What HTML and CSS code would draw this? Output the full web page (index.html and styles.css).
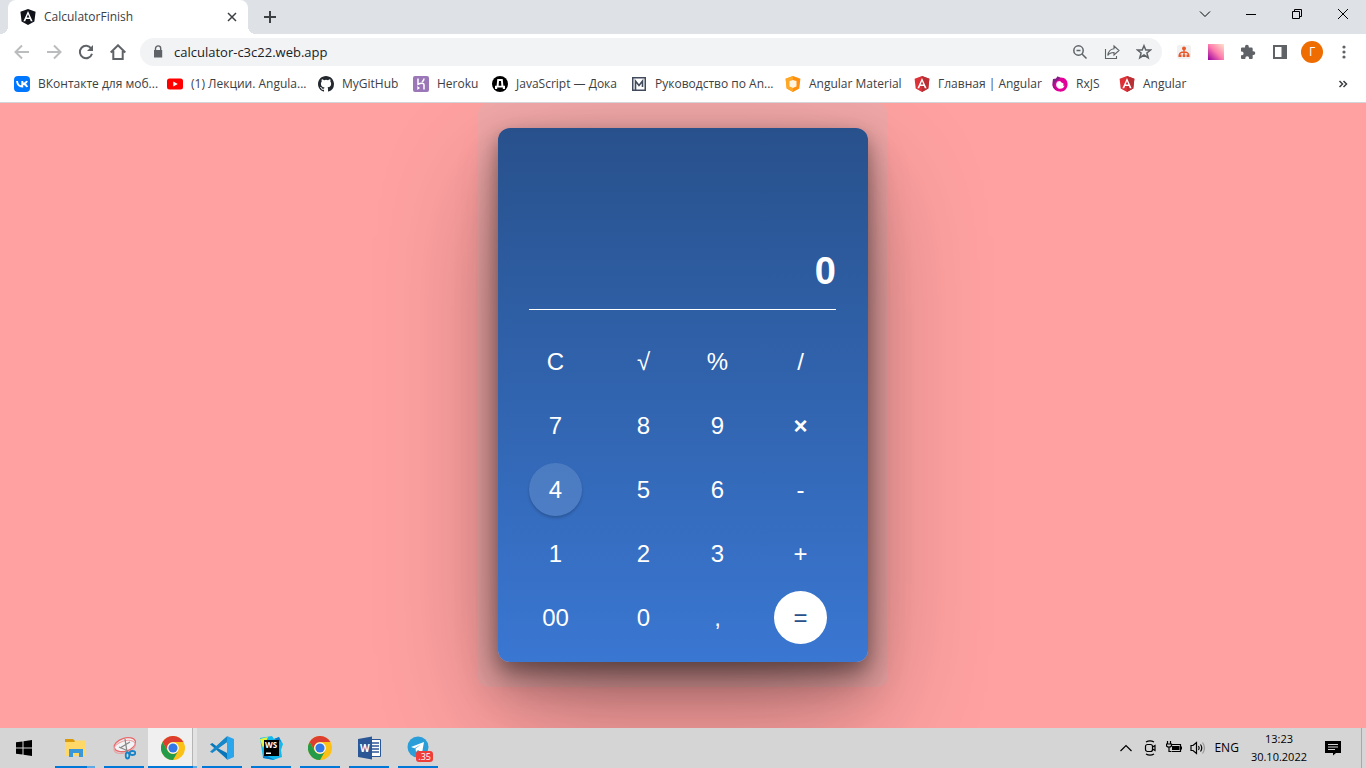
FILE: index.html
```html
<!DOCTYPE html>
<html lang="ru">
<head>
<meta charset="utf-8">
<title>CalculatorFinish</title>
<link rel="stylesheet" href="styles.css">
</head>
<body>
<svg class="defs" aria-hidden="true">
  <symbol id="ng-shield" viewBox="0 0 16 16"><path fill="#dd3138" d="M8 0L15.400 2.700L14.300 12.500L8 16L1.700 12.500L.6 2.700z"/><path fill="#b92f34" d="M8 0L15.400 2.700L14.300 12.500L8 16z"/><path fill="#fff" fill-rule="evenodd" d="M8 2L3.400 12.300H5.200L6.100 10H9.900L10.800 12.300H12.600zM8 5.200L9.300 8.500H6.700z"/></symbol>
  <symbol id="chrome" viewBox="0 0 24 24"><circle cx="12" cy="12" r="12" fill="#fbc116"/><path fill="#de3e2f" d="M1.600 6A12 12 0 0 1 22.400 6H12A6 6 0 0 0 6.800 15z"/><path fill="#249b49" d="M1.600 6A12 12 0 0 0 12 24L17.200 15A6 6 0 0 1 6.800 15z"/><circle cx="12" cy="12" r="5.800" fill="#fff"/><circle cx="12" cy="12" r="4.600" fill="#3478e5"/></symbol>
</svg>

<header class="browser">
  <div class="tabstrip">
    <div class="tab">
      <svg class="i16" viewBox="0 0 16 16"><path fill="#10131a" d="M8 0L15.600 2.700L14.400 12.500L8 16L1.600 12.500L.4 2.700z"/><path fill="#fff" fill-rule="evenodd" d="M8 2L3.400 12.300H5.200L6.100 10H9.900L10.800 12.300H12.600zM8 5.200L9.300 8.500H6.700z"/></svg>
      <span class="tab-title">CalculatorFinish</span>
      <button class="bare" aria-label="Close tab"><svg class="i16" viewBox="0 0 16 16"><path class="ln1" d="M4 4L12 12M12 4L4 12"/></svg></button>
    </div>
    <button class="bare new-tab" aria-label="New tab"><svg class="i16" viewBox="0 0 16 16"><path class="ln2" d="M8 2V14M2 8H14"/></svg></button>
    <div class="window-buttons">
      <button class="bare" aria-label="Search tabs"><svg class="i16" viewBox="0 0 16 16"><path class="win" d="M3 5.500L8 10.500L13 5.500"/></svg></button>
      <button class="bare" aria-label="Minimize"><svg class="i16" viewBox="0 0 16 16"><path class="win" d="M3 8.500H13"/></svg></button>
      <button class="bare" aria-label="Restore"><svg class="i16" viewBox="0 0 16 16"><path class="win" d="M3.500 5.500H10.500V12.500H3.500zM5.500 5V3.500H12.500V10.500H11"/></svg></button>
      <button class="bare" aria-label="Close"><svg class="i16" viewBox="0 0 16 16"><path class="win" d="M3 3L13 13M13 3L3 13"/></svg></button>
    </div>
  </div>

  <div class="toolbar">
    <div class="nav">
      <button class="bare off" aria-label="Back"><svg class="i16" viewBox="0 0 16 16"><path class="ln2" d="M15 8H2M8 1.500L1.500 8L8 14.500"/></svg></button>
      <button class="bare off" aria-label="Forward"><svg class="i16" viewBox="0 0 16 16"><path class="ln2" d="M1 8H14M8 1.500L14.500 8L8 14.500"/></svg></button>
      <button class="bare" aria-label="Reload"><svg class="i16" viewBox="0 0 16 16"><path class="ln2" d="M13.200 4.500A6.200 6.200 0 1 0 14 9.800"/><path fill="currentColor" d="M15 1V7H9z"/></svg></button>
      <button class="bare" aria-label="Home"><svg class="i16" viewBox="0 0 16 16"><path class="ln2" d="M.7 8.500L8 1.300L15.300 8.500M3.300 7V15H12.700V7"/></svg></button>
    </div>
    <label class="omnibox">
      <svg class="i16" viewBox="0 0 16 16"><path fill="currentColor" d="M4 6H12.200V13.500H4z"/><path fill="none" stroke="currentColor" stroke-width="1.400" d="M5.500 6.500V4.500A2.600 2.600 0 0 1 10.700 4.500V6.500"/></svg>
      <input class="url" type="text" value="calculator-c3c22.web.app" aria-label="Address">
      <button class="bare" aria-label="Zoom"><svg class="i16" viewBox="0 0 16 16"><circle class="ln1" cx="6.500" cy="6.500" r="4.700"/><path class="ln1" d="M10 10L14.500 14.500M4.500 6.500H8.500"/></svg></button>
      <button class="bare" aria-label="Share"><svg class="i16" viewBox="0 0 16 16"><path class="share" d="M1.500 5V14.500H12.500V12M10 2L15 6.500L10 11V8.500C7 8.500 5 9.500 3.800 11.500C4.200 8 6.500 5.200 10 4.800z"/></svg></button>
      <button class="bare" aria-label="Bookmark"><svg class="i16" viewBox="0 0 16 16"><path class="ln1" d="M8 1.700L9.800 6H14.600L10.900 9L12.200 13.700L8 11L3.800 13.700L5.100 9L1.400 6H6.200z"/></svg></button>
    </label>
    <div class="extensions">
      <svg class="i16" viewBox="0 0 16 16"><rect x="1" y="1" width="14" height="14" rx="2" fill="#f1f1f1"/><path fill="none" stroke="#e8582b" stroke-width="1.300" d="M8 5V13M3.500 11C3.500 7 12.500 7 12.500 11"/><circle cx="8" cy="4.500" r="2" fill="#e8582b"/><path fill="#e8582b" d="M2.500 10.500H5.500V13H2.500zM6.700 10.500H9.300V13H6.700zM10.500 10.500H13.500V13H10.500z"/></svg>
      <svg class="i16" viewBox="0 0 16 16"><defs><linearGradient id="pk" x1="0" y1="1" x2="1" y2="0"><stop offset="0" stop-color="#9600a0"/><stop offset=".5" stop-color="#ff7dad"/><stop offset="1" stop-color="#ffe4c8"/></linearGradient></defs><rect width="16" height="16" fill="url(#pk)"/></svg>
      <svg class="i16" viewBox="0 0 16 16"><path fill="currentColor" d="M1 4.500Q1 3.500 2 3.500H5V2.700A1.900 1.900 0 0 1 8.800 2.700V3.500H11.500Q12.700 3.500 12.700 4.700V7.200H13.400A1.900 1.900 0 0 1 13.400 11H12.700V14Q12.700 15 11.700 15H9.100V14.200A1.900 1.900 0 0 0 5.300 14.200V15H2Q1 15 1 14V11.300H1.700A1.900 1.900 0 0 0 1.700 7.500H1z"/></svg>
      <svg class="i16" viewBox="0 0 16 16"><path fill="currentColor" fill-rule="evenodd" d="M1 1H15V15H1zM3 3V13H9.500V3z"/></svg>
      <span class="avatar">Г</span>
      <svg class="i16" viewBox="0 0 16 16"><g fill="currentColor"><circle cx="8" cy="3" r="1.600"/><circle cx="8" cy="8" r="1.600"/><circle cx="8" cy="13" r="1.600"/></g></svg>
    </div>
  </div>

  <nav class="bookmarks">
    <a href="#"><svg class="i16" viewBox="0 0 16 16"><rect width="16" height="16" rx="4" fill="#07f"/><path fill="none" stroke="#fff" stroke-width="1.900" d="M3 5C3.400 8.500 5 10.500 8.300 10.500V5M13 5C12.300 7 10.500 7.800 8.500 7.800C10.500 7.800 12.400 9 13.200 11"/></svg>ВКонтакте для моб...</a>
    <a href="#"><svg class="i16" viewBox="0 0 16 16"><rect y="2.500" width="16" height="11" rx="2.500" fill="red"/><path fill="#fff" d="M6.300 5.500L10.800 8L6.300 10.500z"/></svg>(1) Лекции. Angula...</a>
    <a href="#"><svg class="i16" viewBox="0 0 16 16"><path fill="#24292f" d="M8 0C3.580 0 0 3.580 0 8c0 3.540 2.290 6.530 5.470 7.590.4.070.55-.17.55-.38v-1.490c-2.010.37-2.530-.49-2.690-.94-.09-.23-.48-.94-.82-1.130-.28-.15-.68-.52-.01-.53.63-.01 1.080.58 1.230.82.72 1.210 1.870.87 2.330.66.070-.52.28-.87.510-1.070-1.780-.2-3.640-.89-3.640-3.950 0-.87.31-1.590.82-2.150-.08-.2-.36-1.020.08-2.120 0 0 .67-.21 2.200.82a7.600 7.600 0 0 1 4 0c1.530-1.040 2.200-.82 2.200-.82.44 1.100.16 1.920.08 2.120.51.56.82 1.270.82 2.150 0 3.070-1.870 3.750-3.650 3.950.29.25.54.73.54 1.480v2.190c0 .21.15.46.55.38A8 8 0 0 0 16 8C16 3.580 12.420 0 8 0z"/></svg>MyGitHub</a>
    <a href="#"><svg class="i16" viewBox="0 0 16 16"><rect width="16" height="16" rx="2" fill="#9b77b8"/><path fill="none" stroke="#fff" stroke-width="1.500" d="M5 2.500V8.300C7 7.300 11 6.500 11 9V13.500M11 2.500C11 4 10 5.200 9 6"/><path fill="#fff" d="M4.300 10L7 12L4.300 14z"/></svg>Heroku</a>
    <a href="#"><svg class="i16" viewBox="0 0 16 16"><circle cx="8" cy="8" r="8"/><path fill="#fff" fill-rule="evenodd" d="M5.300 3H10.700L11.400 9.700H13V13H10.800V11.500H5.200V13H3V9.700H4.600zM7 5L6.600 9.700H9.400L9 5z"/></svg>JavaScript — Дока</a>
    <a href="#"><svg class="i16" viewBox="0 0 16 16"><path fill="none" stroke="#414a5c" stroke-width="1.500" d="M1.750 1.750H14.250V14.250H1.750z"/><path fill="none" stroke="#414a5c" stroke-width="1.600" d="M4.500 14V5L8 9.500L11.500 5V11"/></svg>Руководство по An...</a>
    <a href="#"><svg class="i16" viewBox="0 0 16 16"><path fill="#ff8f0f" d="M8 0L15.400 2.700L14.300 12.500L8 16L1.700 12.500L.6 2.700z"/><path fill="#ffa726" d="M8 0L.6 2.700L1.700 12.500L8 16z"/><path fill="#fff4e0" d="M8 4L9.500 4.500L11.500 5L11.500 8L11.500 10.500L10 11L8 12L6 11L4.500 10.500L4.500 8L4.500 5L6.500 4.500z"/></svg>Angular Material</a>
    <a href="#"><svg class="i16"><use href="#ng-shield"/></svg>Главная | Angular</a>
    <a href="#"><svg class="i16" viewBox="0 0 16 16"><path fill="#e10098" fill-rule="evenodd" d="M1 3L4 2.700L5.500 .5L8 1.500C13 1 16 4.500 15.600 9C15 13.500 11.500 16 7.500 15.600C3 15 .2 12 .6 8zM5.500 5.500C3.500 7.500 3.800 11 6.500 12.500C9 13.600 12.200 12 12.500 9.500L11.300 10L11.500 7.500L9.500 6.500L8 5z"/><path fill="#7a2483" d="M1 3L4 2.700L5.500 .5L8 1.500L6 4L3 6L2 10L4.500 14Q0 11 .6 8z"/></svg>RxJS</a>
    <a href="#"><svg class="i16"><use href="#ng-shield"/></svg>Angular</a>
    <button class="bare" aria-label="More bookmarks"><svg class="i16" viewBox="0 0 16 16"><path class="ln1" d="M4.500 5L7.500 8L4.500 11M8.500 5L11.500 8L8.500 11"/></svg></button>
  </nav>
</header>

<main class="page">
  <div class="frame">
    <section class="calculator">
      <output class="display">0</output>
      <div class="keys">
        <button>C</button><button>√</button><button>%</button><button>/</button>
        <button>7</button><button>8</button><button>9</button><button class="strong">×</button>
        <button class="hovered">4</button><button>5</button><button>6</button><button>-</button>
        <button>1</button><button>2</button><button>3</button><button>+</button>
        <button>00</button><button>0</button><button>,</button><button class="equals">=</button>
      </div>
    </section>
  </div>
</main>

<footer class="taskbar">
  <button class="bare start" aria-label="Start"><svg class="i16" viewBox="0 0 16 16"><path d="M0 2.300L6.500 1.400V7.500H0zM7.500 1.200L16 0V7.500H7.500zM0 8.500H6.500V14.600L0 13.700zM7.500 8.500H16V16L7.500 14.800z"/></svg></button>
  <button class="task multi" aria-label="Explorer"><svg class="i24" viewBox="0 0 24 24"><path fill="#d99a0c" d="M2 3H10L12 5V8H2z"/><path fill="#ffd868" d="M2 6H11L13 4.500H23V20H2z"/><path fill="#3a97d8" d="M6 13H20V21H16V17H10V21H6z"/></svg></button>
  <button class="task" aria-label="Snipping tool"><svg class="i24" viewBox="0 0 24 24"><g transform="rotate(-18 12 9)"><ellipse cx="13" cy="9" rx="11" ry="6.500" fill="#f3f3f5" stroke="#e8696c" stroke-width="1.300"/><ellipse cx="12" cy="11" rx="11" ry="6" fill="none" stroke="#e9a2a4"/></g><path fill="none" stroke="#888" stroke-width="1.300" d="M13 3L15 16M8 12L18 6M7 11L16 15"/><g fill="none" stroke="#1784c7" stroke-width="1.800"><ellipse cx="15.500" cy="19.500" rx="1.800" ry="3"/><ellipse cx="20.500" cy="17" rx="2.800" ry="2"/></g></svg></button>
  <button class="task active" aria-label="Chrome"><svg class="i24"><use href="#chrome"/></svg></button>
  <button class="task" aria-label="VS Code"><svg class="i24" viewBox="0 0 24 24"><path fill="#0877b9" d="M17 .5L6.500 10.200L2.300 7L0 8.200L14.500 21L17 23.500V17L7.500 12L17 6z"/><path fill="#1688ca" d="M0 15.800L2.300 17L17 6V.5L14 3z"/><path fill="#2aa6ec" d="M17 0L24 3V21L17 24z"/></svg></button>
  <button class="task" aria-label="WebStorm"><svg class="i24" viewBox="0 0 24 24"><path fill="#12b9ee" d="M1 2L13 0L15 3L20 1L24 8L22 14L23 21L14 24L4 22z"/><path fill="#e9f53c" d="M1 3L9 1L4 12z"/><path fill="#087ccc" d="M15 3L20 1L22 6zM5 18L10 21L16 24L4 22z"/><rect x="5" y="4" width="15" height="16"/><text x="6" y="12" class="ws">WS</text><path fill="#fff" d="M7 16.500H12V18H7z"/></svg></button>
  <button class="task" aria-label="Chrome"><svg class="i24"><use href="#chrome"/></svg></button>
  <button class="task" aria-label="Word"><svg class="i24" viewBox="0 0 24 24"><path fill="#fff" stroke="#2b5797" d="M13 3.500H23.500V20.500H13z"/><path stroke="#2b5797" stroke-width="1.300" d="M14 7H22M14 10H22M14 13H22M14 16H22"/><path fill="#2b5797" d="M1 3L15 .5V23.500L1 21z"/><text x="3" y="16" class="word">W</text></svg></button>
  <button class="task" aria-label="Telegram"><svg class="i24" viewBox="0 0 24 24"><circle cx="12" cy="11" r="10.500" fill="#2a9ed8"/><path fill="#fff" d="M5 11L18 6L16 17L12 14L10 16L9.500 12.500L15 8.500L8.500 12.200z"/></svg><span class="badge">.35</span></button>
  <div class="tray">
    <svg class="i16" viewBox="0 0 16 16"><path class="tr" d="M2.500 11L8 5.500L13.500 11"/></svg>
    <svg class="i16" viewBox="0 0 16 16"><rect class="tr" x="3.500" y="4.500" width="7" height="7" rx="2"/><path class="tr" d="M10.500 7L13 5.500V10.500L10.500 9M4 2Q8 -.3 12 2M4 14Q8 16.300 12 14"/></svg>
    <svg class="i16" viewBox="0 0 16 16"><path class="tr" d="M5.500 4.500H14.500V11.500H5.500M15.500 6.500V9.500M1.500 1V3.500M4.500 1V3.500M.5 4H5.500V6Q3 8.500 .5 6zM3 7.500V11.500H5"/><path d="M6 6H13.500V10H6z"/></svg>
    <svg class="i16" viewBox="0 0 16 16"><path class="tr" d="M1 5.500H3L6.500 2.500V13.500L3 10.500H1zM8.500 6Q10 8 8.500 10M10.500 4.500Q13 8 10.500 11.500"/><path class="tr faint" d="M12.500 2.500Q16.500 8 12.500 13.500"/></svg>
    <span>ENG</span>
    <time class="clock"><span>13:23</span><span>30.10.2022</span></time>
    <svg class="i16 note" viewBox="0 0 16 16"><path fill-rule="evenodd" d="M0 1H16V13H11L8 15.500V13H0zM3 4V5H13V4zM3 6.500V7.500H13V6.500zM3 9V10H10V9z"/></svg>
  </div>
</footer>
</body>
</html>
```
FILE: styles.css
```css
* { box-sizing: border-box; }
body {
  margin: 0;
  min-height: 100vh;
  display: flex;
  flex-direction: column;
  font: 12px/16px "Open Sans", "Noto Sans", sans-serif;
  color: #3c4043;
}
button, input { font: inherit; color: inherit; }
.defs { position: absolute; width: 0; height: 0; }
.i16 { width: 16px; height: 16px; flex: none; display: block; }
.i24 { width: 24px; height: 24px; flex: none; display: block; }
.bare { border: 0; padding: 0; background: none; }
.ln2 { fill: none; stroke: currentColor; stroke-width: 2; }
.ln1 { fill: none; stroke: currentColor; stroke-width: 1.5; }
.share { fill: none; stroke: currentColor; stroke-width: 1.1; }
.win { fill: none; stroke: #000; stroke-width: 1; }

.browser { background: #fff; border-bottom: 1px solid #d3d5d8; }
.tabstrip { display: flex; align-items: center; height: 34px; padding-left: 8px; background: #dee1e6; }
.tab {
  position: relative;
  display: flex; align-items: center; gap: 8px;
  width: 240px; height: 34px; padding: 0 8px 0 12px;
  background: #fff; border-radius: 8px 8px 0 0;
}
.tab::before, .tab::after { content: ""; position: absolute; bottom: 0; width: 8px; height: 8px; }
.tab::before { right: 100%; background: radial-gradient(circle at 0 0, #dee1e6 8px, #fff 8px); }
.tab::after { left: 100%; background: radial-gradient(circle at 100% 0, #dee1e6 8px, #fff 8px); }
.tab-title { flex: 1; }
.new-tab { margin-left: 14px; }
.window-buttons { display: flex; gap: 30px; margin-left: auto; padding: 0 15px 6px 0; }

.toolbar { display: flex; align-items: center; height: 36px; padding: 0 14px; color: #5f6368; }
.nav { display: flex; gap: 16px; margin-right: 14px; }
.off { color: #babcbe; }
.omnibox {
  flex: 1; display: flex; align-items: center; gap: 16px;
  height: 28px; padding: 0 10px; border-radius: 14px; background: #f1f3f4;
}
.url {
  flex: 1; min-width: 0; margin-left: -8px; padding: 0;
  border: 0; background: none; color: #202124; font-size: 13px; line-height: 20px;
}
.extensions { display: flex; align-items: center; gap: 16px; margin-left: 14px; }
.avatar {
  width: 22px; height: 22px; margin: 0 -3px; border-radius: 50%;
  background: #ef6c00; color: #fff; line-height: 22px; text-align: center;
}

.bookmarks {
  display: grid; align-items: center; height: 32px; padding: 0 15px 4px 14px;
  grid-template-columns: 153px 151px 95px 79px 139px 154px 129px 138px 67px 1fr 16px;
}
.bookmarks a { display: flex; align-items: center; gap: 8px; color: inherit; text-decoration: none; white-space: nowrap; }

.page { flex: 1; display: flex; justify-content: center; align-items: flex-start; overflow: hidden; background: #ffa1a1; }
.frame {
  width: 410px; padding: 25px 20px; border-radius: 10px;
  background: rgba(190, 190, 190, 0.22);
}
.calculator {
  padding: 120px 32px 18px 31px; border-radius: 12px;
  background: linear-gradient(#28518c, #3a77d2);
  box-shadow:
    0 8px 20px rgba(0, 0, 0, 0.35),
    0 24px 40px rgba(0, 0, 0, 0.25),
    0 50px 120px rgba(0, 0, 0, 0.3);
  font-family: "Liberation Sans", Arial, sans-serif;
  color: #fff;
}
.display {
  display: block; height: 62px; border-bottom: 1px solid #fff;
  font-size: 38px; line-height: 46px; font-weight: 700; text-align: right;
}
.keys { display: grid; grid-template-columns: 88fr 74fr 83fr 62fr; gap: 11px 0; padding-top: 25px; }
.keys button {
  width: 53px; height: 53px; padding: 0; border: 0; border-radius: 50%;
  background: none; font-size: 24px;
}
.keys .strong { font-weight: 700; }
.keys .hovered { background: rgba(255, 255, 255, 0.12); box-shadow: 0 2px 3px rgba(0, 0, 0, 0.2); }
.keys .equals { background: #fff; color: #28518c; }

.taskbar { display: flex; height: 40px; background: #d5d5d5; color: #000; }
.start { display: grid; place-items: center; width: 50px; padding-right: 2px; }
.task { position: relative; display: grid; place-items: center; width: 49px; padding: 0; border: 0; background: none; }
.task::after { content: ""; position: absolute; left: 5px; right: 4px; bottom: 0; height: 2px; background: #0078d7; }
.multi::after { background: linear-gradient(90deg, #0078d7 80%, #5fa8e6 80%); }
.active { background: linear-gradient(90deg, #f0f0f0 44px, #b5b5b5 44px, #b5b5b5 45px, #e2e2e2 45px); }
.active::after { left: 0; right: 0; background: linear-gradient(90deg, #0078d7 45px, #5fa8e6 45px); }
.ws { fill: #fff; font: 700 8px "Open Sans", sans-serif; }
.word { fill: #fff; font: 700 10px "Open Sans", sans-serif; }
.badge {
  position: absolute; right: 9px; bottom: 6px; padding: 0 2px; border-radius: 3px;
  background: #ef3e3a; color: #fff; font-size: 9px; line-height: 11px;
}
.tray { display: flex; align-items: center; gap: 8px; margin-left: auto; margin-right: 4px; padding-right: 20px; border-right: 1px solid #a8a8a8; }
.tr { fill: none; stroke: #000; stroke-width: 1.2; }
.faint { stroke: #999; }
.clock { display: flex; flex-direction: column; text-align: center; font-size: 11px; line-height: 18px; margin-left: 4px; }
.note { margin-left: 10px; }
```
